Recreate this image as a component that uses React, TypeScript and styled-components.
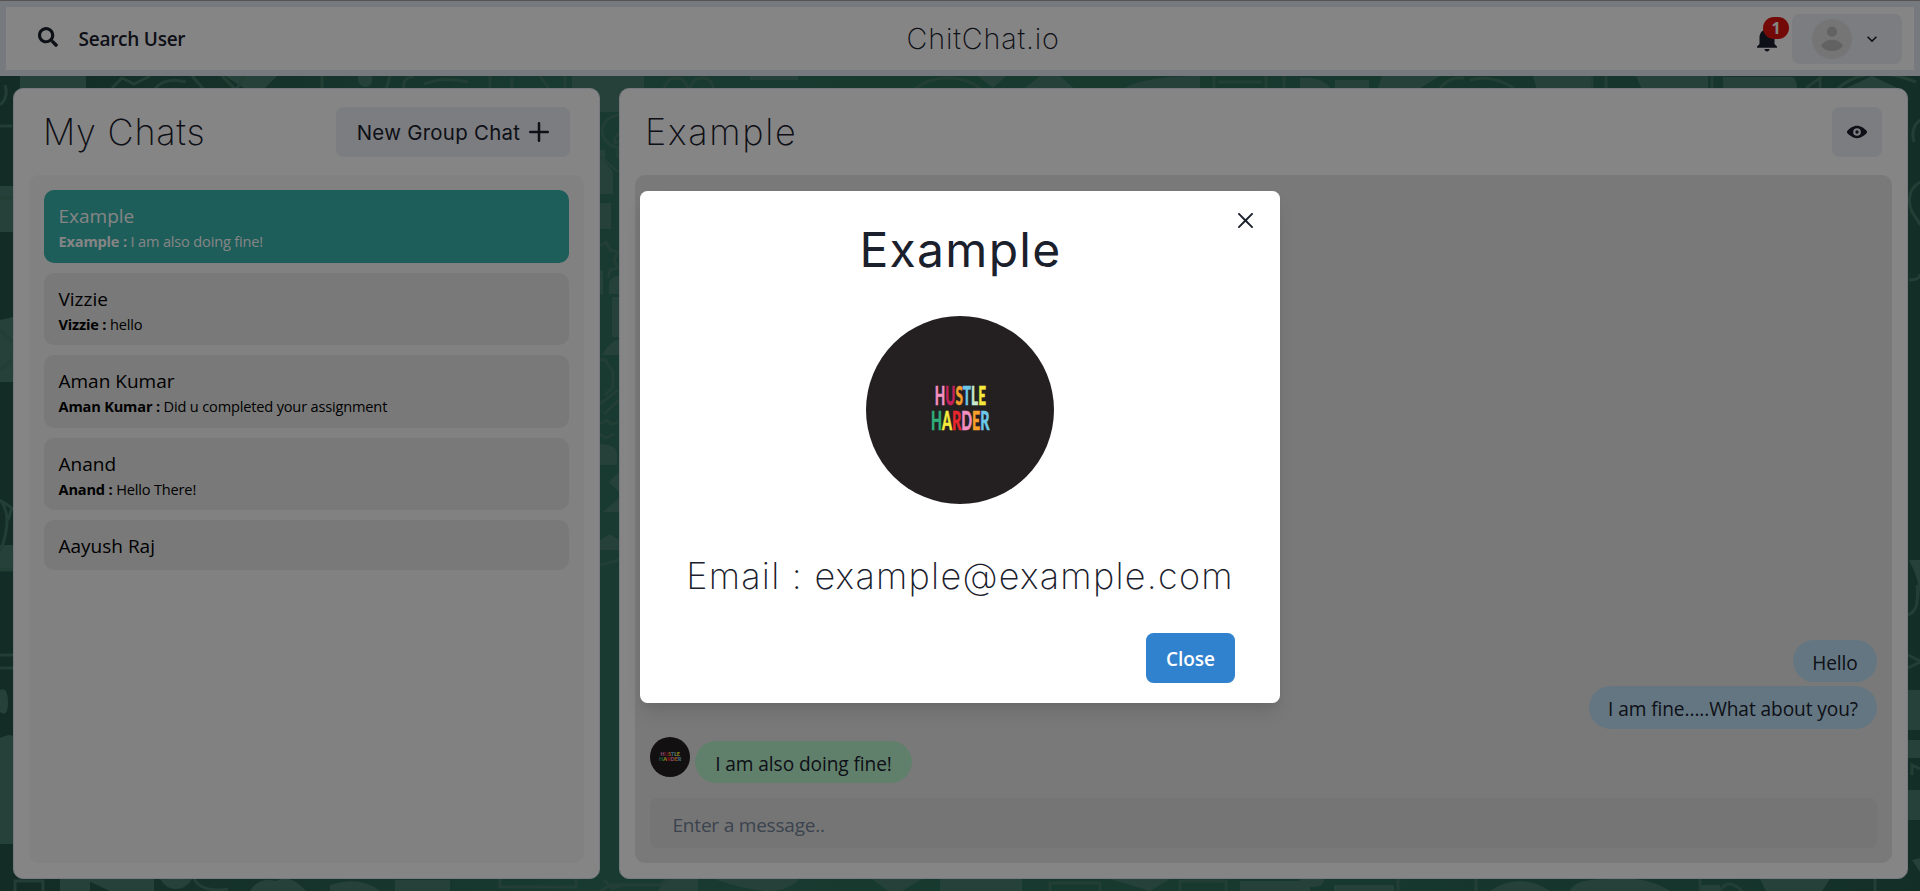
import React from "react";
import styled, { createGlobalStyle, css } from "styled-components";
import { FaSearch } from "react-icons/fa";

const body = `"Open Sans", "Noto Sans", sans-serif`;
const display = `Inter, Roboto, sans-serif`;

const GlobalStyle = createGlobalStyle`
  *, *::before, *::after { box-sizing: border-box; }
  body { margin: 0; font-family: ${body}; color: #1a202c; overflow: hidden; }
  button { font: inherit; color: inherit; border: 0; padding: 0; }
`;

const Page = styled.div`
  position: relative;
  width: 1920px;
  height: 891px;
  display: flex;
  flex-direction: column;
  isolation: isolate;
`;

const Wallpaper = styled.svg`
  position: absolute;
  inset: 0;
  z-index: -1;
`;

const Header = styled.header`
  display: flex;
  align-items: center;
  justify-content: space-between;
  height: 76px;
  padding: 6px 12px;
  background: #fff;
  border: 6px solid #e2e8f0;
  border-top-width: 7px;
`;

const TopEdge = styled.div`
  position: absolute;
  top: 0;
  left: 0;
  right: 0;
  height: 1px;
  background: #a6a0a4;
`;

const HeaderActions = styled.div`
  display: flex;
  align-items: center;
`;

const SearchButton = styled.button`
  display: flex;
  align-items: center;
  gap: 20.5px;
  height: 50px;
  padding: 0 29px 0 20px;
  background: transparent;
  font-size: 19px;
  font-weight: 600;
  letter-spacing: -0.25px;
`;

const SearchIcon = styled(FaSearch)`
  width: 20px;
  height: 20px;
  margin-top: -3px;
`;

const Brand = styled.h1`
  margin: 0;
  font-family: ${display};
  font-size: 28.8px;
  font-weight: 200;
  line-height: 38px;
  letter-spacing: 0.8px;
`;

const BellWrap = styled.div`
  position: relative;
  display: flex;
  width: 30px;
  height: 30px;
  margin-right: 10px;
`;

const Badge = styled.span`
  position: absolute;
  top: -7px;
  right: -7px;
  display: flex;
  align-items: center;
  justify-content: center;
  width: 26px;
  height: 22px;
  border-radius: 11px;
  background: #dc1410;
  color: #fff;
  font-size: 16px;
  font-weight: 700;
  line-height: 22px;
`;

const SoftButton = styled.button<{ $w: number }>`
  display: flex;
  align-items: center;
  justify-content: center;
  width: ${(p) => p.$w}px;
  height: 50px;
  border-radius: 7.5px;
  background: #edf0f7;
`;

const UserButton = styled(SoftButton)`
  justify-content: flex-start;
  padding-left: 20px;
  gap: 10px;
`;

const Main = styled.main`
  flex: 1;
  display: flex;
  justify-content: space-between;
  padding: 12px 12px 12px 13px;
`;

const Panel = styled.section<{ $w: number }>`
  display: flex;
  flex-direction: column;
  width: ${(p) => p.$w}px;
  padding: 0 15px 15px;
  background: #fff;
  border: 1px solid #e2e8f0;
  border-radius: 10px;
`;

const PanelHeader = styled.div<{ $pad: number }>`
  display: flex;
  align-items: center;
  justify-content: space-between;
  height: 86px;
  padding: 0 ${(p) => p.$pad}px;
`;

const PanelTitle = styled.h2<{ $tracking: number }>`
  margin: 0 0 1px;
  font-family: ${display};
  font-size: 36px;
  font-weight: 200;
  line-height: 56px;
  letter-spacing: ${(p) => p.$tracking}px;
`;

const GroupButton = styled(SoftButton)`
  gap: 9px;
  font-family: ${display};
  font-size: 20.4px;
  letter-spacing: 0.3px;
`;

const ChatList = styled.div`
  flex: 1;
  display: flex;
  flex-direction: column;
  gap: 10px;
  padding: 15px;
  background: #f8f8f8;
  border-radius: 10px;
`;

const ChatItem = styled.div<{ $active?: boolean; $short?: boolean }>`
  height: ${(p) => (p.$short ? 50 : 72.5)}px;
  padding: 11px 15px 9px 14.5px;
  border-radius: 10px;
  background: #e8e8e8;
  color: #000;
  ${(p) =>
    p.$active &&
    css`
      background: #38b2ac;
      color: #fff;
    `}
`;

const ChatName = styled.div`
  font-size: 19px;
  line-height: 30px;
`;

const ChatPreview = styled.div`
  font-size: 14.6px;
  line-height: 21px;
  letter-spacing: -0.18px;
`;

const Conversation = styled.div`
  flex: 1;
  display: flex;
  flex-direction: column;
  justify-content: flex-end;
  padding: 15px;
  background: #e8e8e8;
  border-radius: 10px;
`;

const MessageRow = styled.div<{ $mine?: boolean; $gap: number }>`
  display: flex;
  align-items: flex-end;
  justify-content: ${(p) => (p.$mine ? "flex-end" : "flex-start")};
  margin-top: ${(p) => p.$gap}px;
`;

const Bubble = styled.span<{ $mine?: boolean; $w: number }>`
  width: ${(p) => p.$w}px;
  height: 42.5px;
  padding-top: 2px;
  text-align: center;
  border-radius: 25px;
  background: ${(p) => (p.$mine ? "#bee3f8" : "#b9f5d0")};
  font-size: 19.1px;
  line-height: 42px;
  letter-spacing: -0.08px;
  white-space: nowrap;
`;

const SenderAvatar = styled.div`
  width: 40px;
  height: 40px;
  margin: 0 5px 6px 0;
`;

const MessageInput = styled.input`
  height: 50px;
  margin-top: 15px;
  padding: 3px 22.5px 0;
  border: 0;
  border-radius: 7.5px;
  background: #e0e0e0;
  font-family: ${body};
  font-size: 19px;
  letter-spacing: -0.2px;
  &::placeholder {
    color: #718096;
    opacity: 1;
  }
`;

const Overlay = styled.div`
  position: absolute;
  inset: 0;
  display: flex;
  align-items: flex-start;
  justify-content: center;
  padding-top: 191px;
  background: rgba(0, 0, 0, 0.48);
`;

const Modal = styled.div`
  position: relative;
  display: flex;
  flex-direction: column;
  align-items: center;
  width: 640px;
  height: 512px;
  background: #fff;
  border-radius: 7.5px;
  box-shadow: 0 12.5px 19px -4px rgba(0, 0, 0, 0.1), 0 5px 7.5px -2.5px rgba(0, 0, 0, 0.05);
`;

const ModalTitle = styled.h2`
  margin: 21px 0 -1px;
  padding-left: 1px;
  font-family: ${display};
  font-size: 48px;
  font-weight: 400;
  line-height: 75px;
  letter-spacing: 1.3px;
`;

const CloseCross = styled.button`
  position: absolute;
  top: 9px;
  right: 14.5px;
  display: flex;
  align-items: center;
  justify-content: center;
  width: 40px;
  height: 40px;
  background: transparent;
`;

const ProfilePicture = styled.div`
  width: 188px;
  height: 188px;
  margin-top: 30px;
`;

const Email = styled.p`
  margin: 41.5px 0 0;
  font-family: ${display};
  font-size: 36px;
  font-weight: 200;
  line-height: 60px;
  letter-spacing: 1.25px;
  white-space: nowrap;
`;

const CloseButton = styled.button`
  align-self: flex-end;
  width: 89px;
  height: 50px;
  margin: 27.5px 45px 0 0;
  padding-top: 1px;
  border-radius: 7.5px;
  background: #3182ce;
  color: #fff;
  font-size: 19px;
  font-weight: 600;
`;

const words = [
  {
    x: 68.6,
    y: 88.6,
    width: 51,
    letters: [
      ["H", "#f28fc0"],
      ["U", "#c4205c"],
      ["S", "#f7a02b"],
      ["T", "#6bc8e8"],
      ["L", "#c9e8d0"],
      ["E", "#f5ea3c"],
    ],
  },
  {
    x: 64.8,
    y: 114,
    width: 58.4,
    letters: [
      ["H", "#2fae78"],
      ["A", "#f5ea3c"],
      ["R", "#e8262c"],
      ["D", "#f28fc0"],
      ["E", "#f7a02b"],
      ["R", "#6bc8e8"],
    ],
  },
];

const HustlePicture = ({ size, stretch = 1 }: { size: number; stretch?: number }) => (
  <svg width={size} height={size} viewBox="0 0 187.5 187.5">
    <circle cx="93.75" cy="93.75" r="93.75" fill="#242021" />
    <g transform={`translate(93.75 0) scale(${stretch} 1) translate(-93.75 0)`}>
      {words.map((w) => (
        <text
          key={w.y}
          x={w.x}
          y={w.y}
          textLength={w.width}
          lengthAdjust="spacingAndGlyphs"
          fontFamily="Lato, sans-serif"
          fontSize="26.4"
          fontWeight="900"
        >
          {w.letters.map(([ch, fill], i) => (
            <tspan key={i} fill={fill} stroke={fill} strokeWidth="0.5">
              {ch}
            </tspan>
          ))}
        </text>
      ))}
    </g>
  </svg>
);

const Glyph = ({ size, d, children }: { size: number; d: string; children?: React.ReactNode }) => (
  <svg width={size} height={size} viewBox="0 0 24 24" fill="currentColor">
    <path d={d} />
    {children}
  </svg>
);

const BELL =
  "M12 22c1.1 0 2-.9 2-2h-4c0 1.1.89 2 2 2zm6-6v-5c0-3.07-1.64-5.64-4.5-6.32V4c0-.83-.67-1.5-1.5-1.5s-1.5.67-1.5 1.5v.68C7.63 5.36 6 7.92 6 11v5l-2 2v1h16v-1l-2-2z";
const CHEVRON = "M16.59 8.59L12 13.17 7.41 8.59 6 10l6 6 6-6z";
const PLUS =
  "M0,12a1.5,1.5,0,0,0,1.5,1.5h8.75a.25.25,0,0,1,.25.25V22.5a1.5,1.5,0,0,0,3,0V13.75a.25.25,0,0,1,.25-.25H22.5a1.5,1.5,0,0,0,0-3H13.75a.25.25,0,0,1-.25-.25V1.5a1.5,1.5,0,0,0-3,0v8.75a.25.25,0,0,1-.25.25H1.5A1.5,1.5,0,0,0,0,12Z";
const EYE =
  "M23.432,10.524C20.787,7.614,16.4,4.538,12,4.6,7.6,4.537,3.213,7.615.568,10.524a2.211,2.211,0,0,0,0,2.948C3.182,16.351,7.507,19.4,11.839,19.4h.308c4.347,0,8.671-3.049,11.288-5.929A2.21,2.21,0,0,0,23.432,10.524ZM7.4,12A4.6,4.6,0,1,1,12,16.6,4.6,4.6,0,0,1,7.4,12Z";
const CROSS =
  "M.439,21.44a1.5,1.5,0,0,0,2.122,2.121L11.823,14.3a.25.25,0,0,1,.354,0l9.262,9.263a1.5,1.5,0,1,0,2.122-2.121L14.3,12.177a.25.25,0,0,1,0-.354l9.263-9.262A1.5,1.5,0,0,0,21.439.44L12.177,9.7a.25.25,0,0,1-.354,0L2.561.44A1.5,1.5,0,0,0,.439,2.561L9.7,11.823a.25.25,0,0,1,0,.354Z";

const Doodles = () => (
  <Wallpaper width="1920" height="891" viewBox="0 0 1920 891">
    <defs>
      <linearGradient id="base" x1="0" x2="1920" y1="0" y2="0" gradientUnits="userSpaceOnUse">
        <stop offset="0" stopColor="#255548" />
        <stop offset="0.3" stopColor="#2f705d" />
        <stop offset="0.6" stopColor="#2c6e59" />
        <stop offset="0.9" stopColor="#2b6655" />
        <stop offset="1" stopColor="#25594b" />
      </linearGradient>
    </defs>
    <rect width="1920" height="891" fill="url(#base)" />
    {/* solid doodle silhouettes */}
    <g fill="#4a7d6d">
      <rect x="20" y="70" width="66" height="24" />
      <rect x="572" y="70" width="72" height="42" />
      <path d="M225 76h52l-14 14h-16zM358 76h14q2 10-7 11-8-1-7-11zM750 76h48v4h-48zM978 76h28l-13 12zM1020 92l20-16h20l18 16zM1125 88q20-12 75-12v12z" />
      <path d="M1300 88V78q22-2 30 10zM1335 88v-8h34v8zM1382 76h58l-20 12h-42zM1533 76h60v14h-56zM1636 76h72v14h-66zM1723 77h70q4 4 4 12h-74zM1838 92l34-16 34 16z" />
      <path d="M600 150h5v12l8 10v22h-13zM600 203h11v26h-11zM600 270h3v24h-3zM609 294v-10q2-8 10-8v18zM612 297h8v40h-8zM602 355q8-14 18-16v16zM600 444q17 0 17 10v11h-17zM609 482l10-10v20zM603 512l16-14v14zM600 540l10-6 9 6v10h-19z" />
      <path d="M0 186h13v46H0zM0 320l13-3v65H0zM0 738q13-6 13 0v106H0zM0 690q8-4 8 12T0 712zM0 545h13v24H0z" />
      <path d="M60 891v-12h30v12zM84 879h70v12h-44zM160 879h32q-6 10-16 10t-16-10zM250 891q8-14 26-10 14-8 30 10zM330 885q30-10 50 6h-50zM395 880h55v11h-55z" />
      <path d="M665 879h33v12h-40zM714 879h85q-10 12-30 12t-55-12zM872 879h50l-20 12h-14zM940 879h82v12h-82zM1110 879h60l-20 12zM1240 881h70v10h-70z" />
      <path d="M1300 879h24q0 8-12 8h-12zM1334 885h60v6h-60zM1490 891q30-20 60 0zM1570 891q4-12 36-12 40-4 64 12zM1700 885h20v6h-20zM1760 879h70l-8 12h-56z" />
      <path d="M1909 560q11 20 11 40v-40zM1908 690h12v40h-12zM1908 740h12v18h-12zM1908 790h12v30h-12zM1912 860l8 12v-14z" />
    </g>
    {/* outlined doodles */}
    <g fill="none" stroke="#427766" strokeWidth="3">
      <path d="M112 88l10-10 12 6 16-8M154 90q10-14 32-8M192 76l14 16M222 76l14 14 8-14M322 76v14M390 76l-4 14M404 90q-2-14 10-13M424 84q20-8 44-2M490 76v12M512 78v12M540 76l10 14M565 76v14" />
      <path d="M664 90q2-12 12-12t12 12M690 90q2-12 12-12t12 12M912 92q14-14 36-14t36 14M1214 76v14M1218 82h44M1266 76v14M1284 76v14M1440 88q10-12 24-10M1470 80q22-6 44 8M1592 76v14M1606 76v14M1712 76v14M1806 88l14-10v10M1836 90q30-28 80-8" />
      <path d="M619 115q-15 2-17 16 2 14 17 17M619 133q-6 6-4 10l5-2M600 156l18 16M619 148q-4 6 0 10M600 360h5l8 12v15l-8 8M600 404l18-14M604 414l15-14M600 565l19-5M604 880l8 8 10-2" />
      <path d="M600 246l6-4 4 8 8 2-4 8 4 8-8 2-2 8M600 424l6-4 6 4 6-2M600 434l6 4 8-4" />
      <path d="M0 126h12M0 198h13M0 330l13 12M0 370l12-10M0 570h13M0 655h13M0 668h13M5 85q4 12-5 20M0 500l12 8-4 12M0 500q14 16 0 52" />
      <path d="M1920 120q-10 8-6 22M1920 182q-16 10-8 30l12 18M1909 280q11 0 11-6M1908 615q12-4 9-30M1908 655l12 6M1908 668l12-6M1912 775v-10l8 4" />
      <path d="M15 891V881h28v10M194 879q8 14 34 10M500 879v8h76v-8M600 891l10-6h50l10-8M1050 891v-8h50v8M1180 891v-10h46v10M1398 879v12M1476 879v12M1700 879v12M1720 891q8-14 22 0M1875 879v12" />
    </g>
  </Wallpaper>
);

const chats = [
  { name: "Example", text: "I am also doing fine!", active: true },
  { name: "Vizzie", text: "hello" },
  { name: "Aman Kumar", text: "Did u completed your assignment" },
  { name: "Anand", text: "Hello There!" },
  { name: "Aayush Raj" },
];

export default function App() {
  return (
    <Page>
      <GlobalStyle />
      <Doodles />
      <Header>
        <SearchButton>
          <SearchIcon />
          Search User
        </SearchButton>
        <Brand>ChitChat.io</Brand>
        <HeaderActions>
          <BellWrap>
            <Glyph size={30} d={BELL} />
            <Badge>1</Badge>
          </BellWrap>
          <UserButton $w={110}>
            <svg width="40" height="40" viewBox="0 0 40 40">
              <circle cx="20" cy="20" r="20" fill="#e0e0e0" />
              <circle cx="20" cy="12.7" r="5.1" fill="#bdbdbd" />
              <path d="M9 26.5Q13 20.7 20 20.7T31 26.5Q27.5 32 20 32T9 26.5Z" fill="#bdbdbd" />
            </svg>
            <Glyph size={20} d={CHEVRON} />
          </UserButton>
        </HeaderActions>
      </Header>
      <TopEdge />
      <Main>
        <Panel $w={587}>
          <PanelHeader $pad={14}>
            <PanelTitle $tracking={0.75}>My Chats</PanelTitle>
            <GroupButton $w={234}>
              New Group Chat
              <Glyph size={20} d={PLUS} />
            </GroupButton>
          </PanelHeader>
          <ChatList>
            {chats.map((c) => (
              <ChatItem key={c.name} $active={c.active} $short={!c.text}>
                <ChatName>{c.name}</ChatName>
                {c.text && (
                  <ChatPreview>
                    <b>{c.name} : </b>
                    {c.text}
                  </ChatPreview>
                )}
              </ChatItem>
            ))}
          </ChatList>
        </Panel>
        <Panel $w={1289}>
          <PanelHeader $pad={10}>
            <PanelTitle $tracking={1.7}>Example</PanelTitle>
            <SoftButton $w={50}>
              <Glyph size={20} d={EYE}>
                <circle cx="12" cy="12" r="2" />
              </Glyph>
            </SoftButton>
          </PanelHeader>
          <Conversation>
            <MessageRow $mine $gap={0}>
              <Bubble $mine $w={84}>Hello</Bubble>
            </MessageRow>
            <MessageRow $mine $gap={4}>
              <Bubble $mine $w={288}>I am fine.....What about you?</Bubble>
            </MessageRow>
            <MessageRow $gap={8.5}>
              <SenderAvatar>
                <HustlePicture size={40} stretch={1.78} />
              </SenderAvatar>
              <Bubble $w={217}>I am also doing fine!</Bubble>
            </MessageRow>
            <MessageInput placeholder="Enter a message.." />
          </Conversation>
        </Panel>
      </Main>
      <Overlay>
        <Modal>
          <CloseCross>
            <Glyph size={15} d={CROSS} />
          </CloseCross>
          <ModalTitle>Example</ModalTitle>
          <ProfilePicture>
            <HustlePicture size={188} />
          </ProfilePicture>
          <Email>Email : example@example.com</Email>
          <CloseButton>Close</CloseButton>
        </Modal>
      </Overlay>
    </Page>
  );
}
